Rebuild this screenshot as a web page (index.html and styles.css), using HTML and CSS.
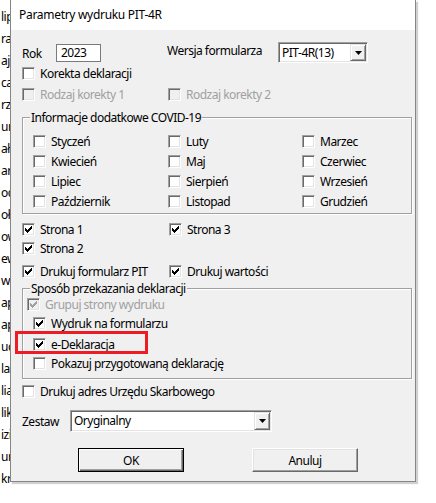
FILE: index.html
```html
<!DOCTYPE html>
<html lang="pl">
<head>
    <meta charset="UTF-8">
    <title>Parametry wydruku PIT-4R</title>
    <link rel="stylesheet" href="styles.css">
</head>
<body>
    <div class="screen">
        <div class="backdrop">
            <div>lip</div><div>ra</div><div>aj</div><div>ca</div><div>rz</div><div>ure</div>
            <div>ała</div><div>arp</div><div>oc</div><div>oła</div><div>ow</div><div>ew</div>
            <div>w</div><div>ap</div><div>ap</div><div>ud</div><div>lal</div><div>lia</div>
            <div>lik</div><div>izi</div><div>ur</div><div>kr</div>
        </div>

        <div class="dialog">
            <div class="titlebar">Parametry wydruku PIT-4R</div>
            <div class="dialog-body">
                <div class="row-top">
                    <span class="lbl lbl-rok">Rok</span>
                    <div class="edit">2023</div>
                    <span class="lbl lbl-wersja">Wersja formularza</span>
                    <div class="combo combo-wersja">
                        <span class="combo-text">PIT-4R(13)</span>
                        <span class="combo-btn"><svg width="7" height="4" viewBox="0 0 7 4"><polygon points="0,0 7,0 3.5,4" fill="#000"/></svg></span>
                    </div>
                </div>

                <label class="check row-korekta"><span class="box"></span>Korekta deklaracji</label>

                <div class="row-rodzaj">
                    <label class="check disabled col-146"><span class="box"></span>Rodzaj korekty 1</label>
                    <label class="check disabled"><span class="box"></span>Rodzaj korekty 2</label>
                </div>

                <div class="group group-covid">
                    <span class="group-title">Informacje dodatkowe COVID-19</span>
                    <div class="months">
                        <label class="check"><span class="box"></span>Styczeń</label>
                        <label class="check"><span class="box"></span>Luty</label>
                        <label class="check"><span class="box"></span>Marzec</label>
                        <label class="check"><span class="box"></span>Kwiecień</label>
                        <label class="check"><span class="box"></span>Maj</label>
                        <label class="check"><span class="box"></span>Czerwiec</label>
                        <label class="check"><span class="box"></span>Lipiec</label>
                        <label class="check"><span class="box"></span>Sierpień</label>
                        <label class="check"><span class="box"></span>Wrzesień</label>
                        <label class="check"><span class="box"></span>Październik</label>
                        <label class="check"><span class="box"></span>Listopad</label>
                        <label class="check"><span class="box"></span>Grudzień</label>
                    </div>
                </div>

                <div class="pair row-strona1">
                    <label class="check checked col-147"><span class="box"><svg class="tick" width="13" height="13" viewBox="0 0 13 13"><path d="M3 5h1v3H3zM4 6h1v3H4zM5 7h1v3H5zM6 6h1v3H6zM7 5h1v3H7zM8 4h1v3H8zM9 3h1v3H9z"/></svg></span>Strona 1</label>
                    <label class="check checked"><span class="box"><svg class="tick" width="13" height="13" viewBox="0 0 13 13"><path d="M3 5h1v3H3zM4 6h1v3H4zM5 7h1v3H5zM6 6h1v3H6zM7 5h1v3H7zM8 4h1v3H8zM9 3h1v3H9z"/></svg></span>Strona 3</label>
                </div>
                <label class="check checked row-strona2"><span class="box"><svg class="tick" width="13" height="13" viewBox="0 0 13 13"><path d="M3 5h1v3H3zM4 6h1v3H4zM5 7h1v3H5zM6 6h1v3H6zM7 5h1v3H7zM8 4h1v3H8zM9 3h1v3H9z"/></svg></span>Strona 2</label>
                <div class="pair row-drukuj">
                    <label class="check checked col-147"><span class="box"><svg class="tick" width="13" height="13" viewBox="0 0 13 13"><path d="M3 5h1v3H3zM4 6h1v3H4zM5 7h1v3H5zM6 6h1v3H6zM7 5h1v3H7zM8 4h1v3H8zM9 3h1v3H9z"/></svg></span>Drukuj formularz PIT</label>
                    <label class="check checked"><span class="box"><svg class="tick" width="13" height="13" viewBox="0 0 13 13"><path d="M3 5h1v3H3zM4 6h1v3H4zM5 7h1v3H5zM6 6h1v3H6zM7 5h1v3H7zM8 4h1v3H8zM9 3h1v3H9z"/></svg></span>Drukuj wartości</label>
                </div>

                <div class="group group-sposob">
                    <span class="group-title">Sposób przekazania deklaracji</span>
                    <label class="check checked disabled row-grupuj"><span class="box"><svg class="tick" width="13" height="13" viewBox="0 0 13 13"><path d="M3 5h1v3H3zM4 6h1v3H4zM5 7h1v3H5zM6 6h1v3H6zM7 5h1v3H7zM8 4h1v3H8zM9 3h1v3H9z"/></svg></span>Grupuj strony wydruku</label>
                    <label class="check checked row-wydruk"><span class="box"><svg class="tick" width="13" height="13" viewBox="0 0 13 13"><path d="M3 5h1v3H3zM4 6h1v3H4zM5 7h1v3H5zM6 6h1v3H6zM7 5h1v3H7zM8 4h1v3H8zM9 3h1v3H9z"/></svg></span>Wydruk na formularzu</label>
                    <label class="check checked row-edek"><span class="box"><svg class="tick" width="13" height="13" viewBox="0 0 13 13"><path d="M3 5h1v3H3zM4 6h1v3H4zM5 7h1v3H5zM6 6h1v3H6zM7 5h1v3H7zM8 4h1v3H8zM9 3h1v3H9z"/></svg></span>e-Deklaracja<span class="highlight"></span></label>
                    <label class="check row-pokazuj"><span class="box"></span>Pokazuj przygotowaną deklarację</label>
                </div>

                <label class="check row-adres"><span class="box"></span>Drukuj adres Urzędu Skarbowego</label>

                <div class="row-zestaw">
                    <span class="lbl lbl-zestaw">Zestaw</span>
                    <div class="combo combo-zestaw">
                        <span class="combo-text">Oryginalny</span>
                        <span class="combo-btn"><svg width="7" height="4" viewBox="0 0 7 4"><polygon points="0,0 7,0 3.5,4" fill="#000"/></svg></span>
                    </div>
                </div>

                <div class="row-buttons">
                    <button class="btn btn-default">OK</button>
                    <button class="btn">Anuluj</button>
                </div>
            </div>
        </div>
    </div>
</body>
</html>
```

FILE: styles.css
```css
body {
    margin: 0;
    background: #fff;
    font-family: "Noto Sans", sans-serif;
    font-size: 12px;
    letter-spacing: -0.5px;
    color: #000;
}
.screen {
    display: flex;
    align-items: flex-start;
    height: 503px;
}
.backdrop {
    width: 9px;
    overflow: hidden;
    padding-top: 6px;
    white-space: nowrap;
    line-height: 22px;
    padding-left: 1px;
}
.dialog {
    width: 406px;
    box-sizing: border-box;
    border: 1px solid #858585;
    border-top: none;
    background: #f0f0f0;
    box-shadow: 2px 2px 1px rgba(0, 0, 0, 0.18);
}
.titlebar {
    height: 30px;
    line-height: 30px;
    background: #fff;
    padding-left: 8px;
    letter-spacing: -0.3px;
}
.dialog-body {
    padding: 12px 0 9px 11px;
}

/* top row */
.row-top {
    display: flex;
    align-items: flex-start;
    height: 21px;
}
.lbl {
    line-height: 13px;
}
.lbl-rok {
    width: 34px;
    margin-top: 5px;
}
.edit {
    width: 45px;
    height: 18px;
    box-sizing: border-box;
    margin-top: 2px;
    border: 1px solid #7a7a7a;
    background: #fff;
    padding-left: 4px;
    line-height: 16px;
}
.lbl-wersja {
    width: 111px;
    margin-left: 66px;
    margin-top: 2px;
}
.combo {
    display: flex;
    box-sizing: border-box;
    height: 21px;
    background: #fff;
    border: 1px solid;
    border-color: #a0a0a0 #fff #fff #a0a0a0;
    box-shadow: inset 1px 1px #696969, inset -1px -1px #e3e3e3;
    padding: 1px;
}
.combo-wersja {
    width: 90px;
}
.combo-text {
    flex: 1;
    padding-left: 2px;
    line-height: 17px;
}
.combo-btn {
    width: 16px;
    height: 17px;
    box-sizing: border-box;
    background: #f0f0f0;
    border: 1px solid;
    border-color: #e3e3e3 #696969 #696969 #e3e3e3;
    box-shadow: inset 1px 1px #fff, inset -1px -1px #a0a0a0;
    display: flex;
    align-items: center;
    justify-content: center;
}

/* checkboxes */
.check {
    display: flex;
    align-items: center;
    height: 13px;
    line-height: 13px;
    white-space: nowrap;
    position: relative;
}
.box {
    width: 13px;
    height: 13px;
    box-sizing: border-box;
    margin-right: 5px;
    flex-shrink: 0;
    background: #fff;
    border: 1px solid;
    border-color: #a0a0a0 #fff #fff #a0a0a0;
    box-shadow: inset 1px 1px #696969, inset -1px -1px #e3e3e3;
    position: relative;
}
.tick {
    position: absolute;
    left: -1px;
    top: -1px;
    fill: #000;
}
.disabled {
    color: #a0a0a0;
}
.disabled .box {
    background: #f0f0f0;
}
.disabled .tick {
    fill: #a0a0a0;
}
.col-146 {
    width: 146px;
}
.col-147 {
    width: 147px;
}
.pair {
    display: flex;
}

.row-korekta {
    margin-top: 4px;
}
.row-rodzaj {
    display: flex;
    margin-top: 8px;
}

/* group boxes */
.group {
    position: relative;
    width: 390px;
    box-sizing: border-box;
    border: 1px solid #a0a0a0;
    box-shadow: inset 1px 1px #fff, 1px 1px #fff;
}
.group-title {
    position: absolute;
    top: -8px;
    left: 7px;
    padding: 0 1px;
    line-height: 15px;
    background: #f0f0f0;
}
.group-covid {
    margin-top: 16px;
    padding: 17px 0 5px 10px;
}
.months {
    display: grid;
    grid-template-columns: 135px 134px 1fr;
    row-gap: 7px;
}

.row-strona1 {
    margin-top: 9px;
}
.row-strona2 {
    margin-top: 6px;
}
.row-drukuj {
    margin-top: 10px;
}

.group-sposob {
    margin-top: 10px;
    padding: 9px 0 8px 10px;
}
.row-grupuj {
    margin-left: -6px;
}
.row-wydruk {
    margin-top: 6px;
}
.row-edek {
    margin-top: 8px;
}
.row-pokazuj {
    margin-top: 6px;
}
.highlight {
    position: absolute;
    left: -18px;
    top: -7px;
    width: 133px;
    height: 23px;
    box-sizing: border-box;
    border: 3px solid #ed1c24;
}

.row-adres {
    margin-top: 6px;
}

.row-zestaw {
    display: flex;
    align-items: center;
    margin-top: 12px;
}
.lbl-zestaw {
    width: 48px;
}
.combo-zestaw {
    width: 202px;
    height: 22px;
}
.combo-zestaw .combo-btn {
    height: 18px;
}
.combo-zestaw .combo-text {
    line-height: 18px;
}

.row-buttons {
    display: flex;
    gap: 68px;
    margin-top: 16px;
    padding-left: 56px;
}
.btn {
    width: 106px;
    height: 24px;
    box-sizing: border-box;
    background: #f0f0f0;
    font-family: inherit;
    font-size: 12px;
    letter-spacing: inherit;
    color: #000;
    border: 1px solid;
    border-color: #fff #696969 #696969 #fff;
    box-shadow: inset -1px -1px #a0a0a0, inset 1px 1px #e3e3e3;
    padding: 0;
}
.btn-default {
    border-color: #000;
    box-shadow: inset 1px 1px #fff, inset -1px -1px #696969, inset -2px -2px #a0a0a0;
}
```
